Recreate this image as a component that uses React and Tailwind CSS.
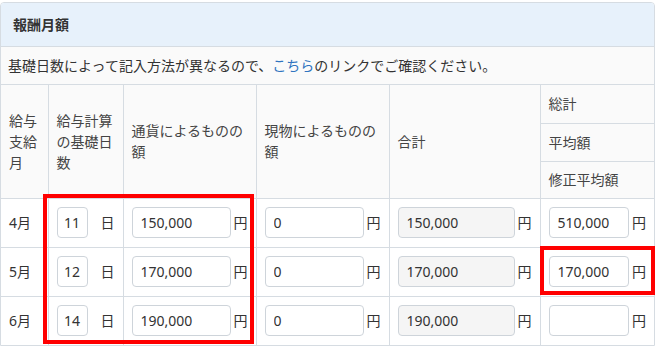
import React from "react";

const rows = [
  { month: "4月", days: "11", cash: "150,000", goods: "0", total: "150,000", avg: "510,000" },
  { month: "5月", days: "12", cash: "170,000", goods: "0", total: "170,000", avg: "170,000" },
  { month: "6月", days: "14", cash: "190,000", goods: "0", total: "190,000", avg: "" },
];

const th = "border border-[#d6dce2] bg-[#fafafa] px-2 text-left align-middle font-normal text-[#444] leading-[21px]";
const td = "border border-[#d6dce2] bg-white px-2 align-middle";

const YenInput = ({ value, gray }) => (
  <div className="flex items-center gap-[3px]">
    <input
      defaultValue={value}
      readOnly
      className={`h-[31px] w-full min-w-0 flex-1 rounded-[4px] border border-[#ced4da] px-2 text-[14px] text-[#333] outline-none ${
        gray ? "bg-[#f5f5f5]" : "bg-white"
      }`}
    />
    <span className="shrink-0 text-[14px] text-[#333]">円</span>
  </div>
);

export default function App() {
  return (
    <div className="relative h-[346px] w-[656px] overflow-hidden bg-white font-['Noto_Sans','Noto_Sans_CJK_JP',sans-serif] text-[14px] text-[#333]">
      <div className="mt-[2px] w-[655px] overflow-hidden rounded-t-[4px] border border-[#d6dce2]">
        {/* ヘッダー */}
        <div className="flex h-[44px] items-center border-b border-[#d6dce2] bg-[#e7f1fb] px-3 font-bold text-[#333]">
          報酬月額
        </div>
        <div className="flex h-[38px] items-center border-b border-[#d6dce2] bg-[#fafafa] px-[7px] text-[#333]">
          基礎日数によって記入方法が異なるので、
          <span className="text-[#2f74c0]">こちら</span>
          のリンクでご確認ください。
        </div>

        <table className="w-full table-fixed border-collapse border-hidden">
          <colgroup>
            <col className="w-[47px]" />
            <col className="w-[75px]" />
            <col className="w-[133px]" />
            <col className="w-[133px]" />
            <col className="w-[151px]" />
            <col />
          </colgroup>
          <thead>
            <tr className="h-[38px]">
              <th rowSpan={3} className={th}>給与支給月</th>
              <th rowSpan={3} className={th}>給与計算の基礎日数</th>
              <th rowSpan={3} className={th}>通貨によるものの額</th>
              <th rowSpan={3} className={th}>現物によるものの額</th>
              <th rowSpan={3} className={th}>合計</th>
              <th className={th}>総計</th>
            </tr>
            <tr className="h-[38px]">
              <th className={th}>平均額</th>
            </tr>
            <tr className="h-[37px]">
              <th className={th}>修正平均額</th>
            </tr>
          </thead>
          <tbody>
            {rows.map((r) => (
              <tr key={r.month} className="h-[49px]">
                <td className={td}>{r.month}</td>
                <td className={td}>
                  <div className="flex items-center justify-between">
                    <input
                      defaultValue={r.days}
                      readOnly
                      className="h-[31px] w-[31px] rounded-[4px] border border-[#ced4da] bg-white text-center text-[14px] text-[#333] outline-none"
                    />
                    <span>日</span>
                  </div>
                </td>
                <td className={td}><YenInput value={r.cash} /></td>
                <td className={td}><YenInput value={r.goods} /></td>
                <td className={td}><YenInput value={r.total} gray /></td>
                <td className={td}><YenInput value={r.avg} /></td>
              </tr>
            ))}
          </tbody>
        </table>
      </div>

      {/* 注釈の赤枠 */}
      <div className="pointer-events-none absolute left-[43px] top-[194px] h-[150px] w-[211px] border-4 border-[#ff0000]" />
      <div className="pointer-events-none absolute left-[540px] top-[246px] h-[49px] w-[115px] border-4 border-[#ff0000]" />
    </div>
  );
}
